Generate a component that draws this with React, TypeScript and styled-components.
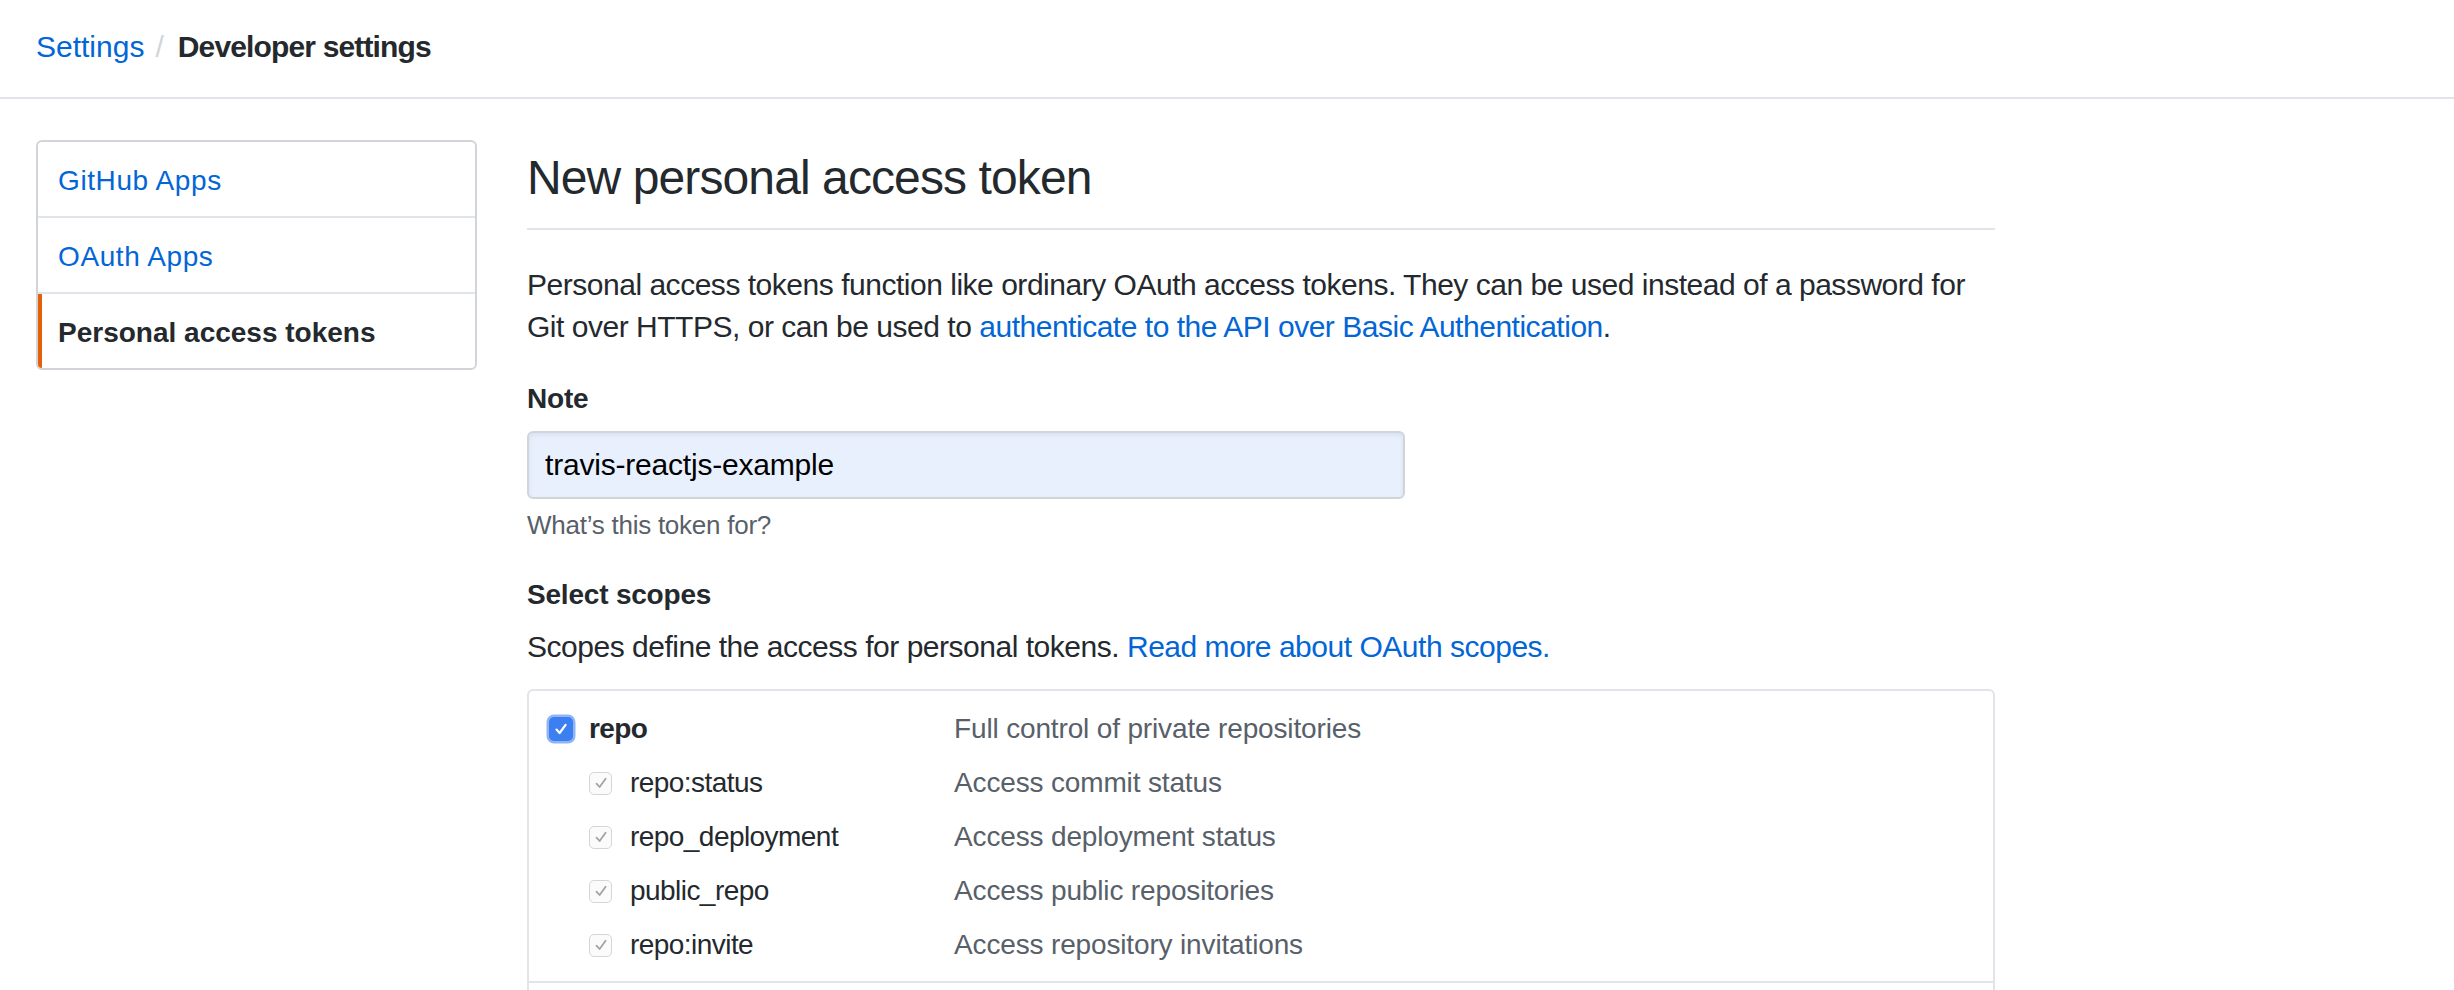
import React from "react";
import styled, { createGlobalStyle } from "styled-components";

const GlobalStyle = createGlobalStyle`
  html, body {
    margin: 0;
    padding: 0;
    background: #ffffff;
  }
  body {
    font-family: "Liberation Sans", Arial, sans-serif;
    color: #24292e;
    -webkit-font-smoothing: antialiased;
  }
  * { box-sizing: border-box; }
`;

const Page = styled.div`
  width: 2454px;
  height: 990px;
  overflow: hidden;
  background: #fff;
`;

const Header = styled.header`
  height: 99px;
  border-bottom: 2px solid #e1e4e8;
  display: flex;
  align-items: center;
  padding: 0 36px 4px;
  font-size: 30px;
`;

const Crumb = styled.a<{ $current?: boolean }>`
  color: ${(p) => (p.$current ? "#24292e" : "#0366d6")};
  font-weight: ${(p) => (p.$current ? 700 : 400)};
  letter-spacing: ${(p) => (p.$current ? "-0.85px" : "0")};
  text-decoration: none;
`;

const Sep = styled.span`
  color: #d1d5da;
  margin: 0 14px 0 11px;
`;

const Layout = styled.div`
  display: flex;
  align-items: flex-start;
  gap: 50px;
  padding: 41px 36px 0;
`;

const SideMenu = styled.nav`
  width: 441px;
  flex: none;
  border: 2px solid #d1d5da;
  border-radius: 6px;
  overflow: hidden;
  display: flex;
  flex-direction: column;
`;

const MenuItem = styled.a<{ $selected?: boolean; $last?: boolean }>`
  position: relative;
  display: block;
  box-sizing: content-box;
  height: 42px;
  line-height: 42px;
  padding: 18px 20px 14px;
  font-size: 28px;
  text-decoration: none;
  color: ${(p) => (p.$selected ? "#24292e" : "#0366d6")};
  font-weight: ${(p) => (p.$selected ? 700 : 400)};
  letter-spacing: ${(p) => (p.$selected ? "0" : "0.6px")};
  border-bottom: ${(p) => (p.$last ? "none" : "2px solid #e1e4e8")};

  &::before {
    content: "";
    display: ${(p) => (p.$selected ? "block" : "none")};
    position: absolute;
    left: 0;
    top: 0;
    bottom: 0;
    width: 4px;
    background: #e36209;
  }
`;

const Main = styled.main`
  width: 1468px;
  flex: none;
  font-size: 28px;
  line-height: 42px;
`;

const Subhead = styled.h2`
  margin: 8px 0 34px;
  padding-bottom: 20px;
  border-bottom: 2px solid #e1e4e8;
  font-size: 48px;
  line-height: 60px;
  font-weight: 400;
  letter-spacing: -0.9px;
  color: #24292e;
`;

const Para = styled.p<{ $mb?: number }>`
  margin: 0 0 ${(p) => p.$mb ?? 30}px;
  font-size: 30px;
  letter-spacing: -0.48px;
`;

const Link = styled.a`
  color: #0366d6;
  text-decoration: none;
`;

const Label = styled.div<{ $mb?: number }>`
  font-weight: 700;
  margin-bottom: ${(p) => p.$mb ?? 11}px;
  letter-spacing: -0.2px;
`;

const Input = styled.div`
  width: 878px;
  height: 68px;
  border: 2px solid #d1d5da;
  border-radius: 6px;
  background: #e8f0fe;
  box-shadow: inset 0 2px 4px rgba(27, 31, 35, 0.075);
  padding: 0 16px;
  display: flex;
  align-items: center;
  color: #000;
  font-size: 30px;
  letter-spacing: -0.2px;
`;

const Note = styled.div`
  margin: 8px 0 31px;
  font-size: 26px;
  line-height: 36px;
  color: #586069;
  letter-spacing: -0.25px;
`;

const ScopesBox = styled.div`
  border: 2px solid #e1e4e8;
  border-bottom: none;
  border-radius: 6px 6px 0 0;
  padding-bottom: 60px;
`;

const ScopeGroup = styled.div`
  padding: 11px 0 9px;
  border-bottom: 2px solid #e1e4e8;
`;

const ScopeRow = styled.div`
  display: grid;
  grid-template-columns: 407px 1fr;
  align-items: center;
  height: 54px;
  padding-left: 18px;
`;

const ScopeName = styled.label<{ $sub?: boolean }>`
  display: flex;
  align-items: center;
  padding-left: ${(p) => (p.$sub ? 42 : 0)}px;
  gap: ${(p) => (p.$sub ? 18 : 14)}px;
  font-weight: ${(p) => (p.$sub ? 400 : 700)};
  color: #24292e;
  letter-spacing: ${(p) => (p.$sub ? "-0.55px" : "-0.6px")};
`;

const ScopeDesc = styled.span`
  color: #586069;
  letter-spacing: -0.15px;
`;

const Box = styled.span<{ $primary?: boolean }>`
  flex: none;
  display: inline-flex;
  align-items: center;
  justify-content: center;
  width: ${(p) => (p.$primary ? 24 : 23)}px;
  height: ${(p) => (p.$primary ? 24 : 23)}px;
  margin: ${(p) => (p.$primary ? "2px" : "0")};
  border-radius: 5px;
  background: ${(p) => (p.$primary ? "#3b7ff1" : "#fbfbfb")};
  border: ${(p) => (p.$primary ? "none" : "1.5px solid #d6d6d6")};
  box-shadow: ${(p) => (p.$primary ? "0 0 0 2.5px #8fb5f7" : "none")};
`;

const Checkbox: React.FC<{ primary?: boolean }> = ({ primary }) => (
  <Box $primary={primary}>
    <svg width="16" height="16" viewBox="0 0 16 16" fill="none">
      <path
        d="M3.5 8.6 L6.6 12 L12.6 3.8"
        stroke={primary ? "#ffffff" : "#a3a3a3"}
        strokeWidth={primary ? 2.2 : 1.8}
        strokeLinecap="round"
        strokeLinejoin="round"
      />
    </svg>
  </Box>
);

type Scope = { name: string; desc: string; sub?: boolean };

const repoScopes: Scope[] = [
  { name: "repo", desc: "Full control of private repositories" },
  { name: "repo:status", desc: "Access commit status", sub: true },
  { name: "repo_deployment", desc: "Access deployment status", sub: true },
  { name: "public_repo", desc: "Access public repositories", sub: true },
  { name: "repo:invite", desc: "Access repository invitations", sub: true },
];

const Group: React.FC<{ scopes: Scope[] }> = ({ scopes }) => (
  <ScopeGroup>
    {scopes.map((s) => (
      <ScopeRow key={s.name}>
        <ScopeName $sub={s.sub}>
          <Checkbox primary={!s.sub} />
          {s.name}
        </ScopeName>
        <ScopeDesc>{s.desc}</ScopeDesc>
      </ScopeRow>
    ))}
  </ScopeGroup>
);

export default function App() {
  return (
    <Page>
      <GlobalStyle />
      <Header>
        <Crumb href="#">Settings</Crumb>
        <Sep>/</Sep>
        <Crumb $current>Developer settings</Crumb>
      </Header>
      <Layout>
        <SideMenu>
          <MenuItem href="#">GitHub Apps</MenuItem>
          <MenuItem href="#">OAuth Apps</MenuItem>
          <MenuItem $selected $last>
            Personal access tokens
          </MenuItem>
        </SideMenu>
        <Main>
          <Subhead>New personal access token</Subhead>
          <Para>
            Personal access tokens function like ordinary OAuth access tokens. They can be used
            instead of a password for Git over HTTPS, or can be used to{" "}
            <Link href="#">authenticate to the API over Basic Authentication</Link>.
          </Para>
          <Label>Note</Label>
          <Input>travis-reactjs-example</Input>
          <Note>What’s this token for?</Note>
          <Label $mb={10}>Select scopes</Label>
          <Para $mb={21}>
            Scopes define the access for personal tokens.{" "}
            <Link href="#">Read more about OAuth scopes.</Link>
          </Para>
          <ScopesBox>
            <Group scopes={repoScopes} />
          </ScopesBox>
        </Main>
      </Layout>
    </Page>
  );
}
